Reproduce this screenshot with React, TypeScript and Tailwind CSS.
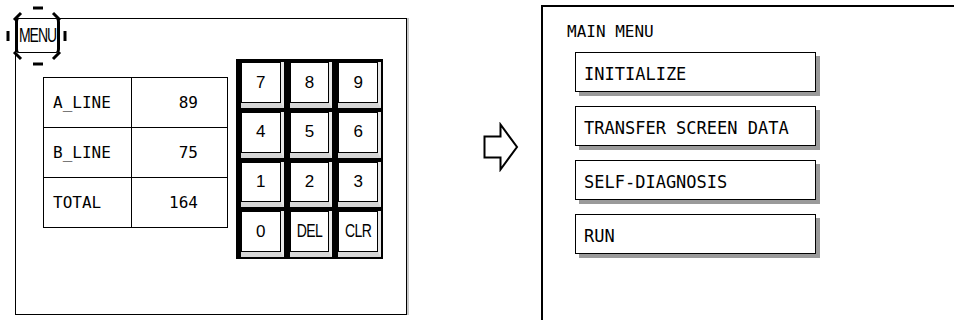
import React from "react";

const ROWS = [
  { name: "A_LINE", value: "89" },
  { name: "B_LINE", value: "75" },
  { name: "TOTAL", value: "164" },
];

const KEYS = ["7", "8", "9", "4", "5", "6", "1", "2", "3", "0", "DEL", "CLR"];

const MENU_ITEMS = ["INITIALIZE", "TRANSFER SCREEN DATA", "SELF-DIAGNOSIS", "RUN"];

const MONO = { fontFamily: '"DejaVu Sans Mono", "Liberation Mono", monospace' };

function Key({ label }: { label: string }) {
  const small = label.length > 1;
  return (
    <div className="flex border-l-[5px] border-t-[3px] border-black">
      <div className="flex flex-1 border-r border-b border-black">
        <div className="flex flex-1 border-r-[3px] border-b-[5px] border-r-[#e8e8e8] border-b-[#d6d6d6]">
          <div className="flex flex-1 items-center justify-center border border-black bg-white text-black">
            {small ? (
              <span className="inline-block scale-y-[1.3] text-[14px] tracking-[-0.5px]">{label}</span>
            ) : (
              <span className="text-[17px]">{label}</span>
            )}
          </div>
        </div>
      </div>
    </div>
  );
}

function Selection() {
  // touch marks around the MENU switch
  return (
    <svg
      className="pointer-events-none absolute left-[-16px] top-[-19px]"
      width="75"
      height="75"
      viewBox="0 0 75 75"
    >
      <g stroke="#000" strokeWidth="3" strokeLinecap="butt">
        <line x1="33" y1="8" x2="43" y2="8" />
        <line x1="33" y1="64" x2="43" y2="64" />
        <line x1="8" y1="31" x2="8" y2="41" />
        <line x1="65" y1="31" x2="65" y2="41" />
        <line x1="14" y1="20" x2="21" y2="13" />
        <line x1="53" y1="13" x2="60" y2="20" />
        <line x1="14" y1="52" x2="21" y2="59" />
        <line x1="53" y1="59" x2="60" y2="52" />
      </g>
    </svg>
  );
}

export default function App() {
  return (
    <div
      className="flex h-[320px] w-[954px] items-start overflow-hidden bg-white text-black"
      style={{ fontFamily: '"Liberation Sans", Arial, sans-serif' }}
    >
      {/* Left: operation screen */}
      <div className="relative ml-[15px] mt-[18px] flex h-[297px] w-[392px] shrink-0 items-start gap-[8px] border border-black pl-[27px] pt-[40px] shadow-[2px_0_0_#c8c8c8]">
        <Selection />
        <div className="absolute left-[-1px] top-[-1px] flex h-[35px] w-[45px] items-center justify-center rounded-[4px] border-x-[3px] border-y border-black bg-white">
          <span className="inline-block scale-y-[1.4] text-[14px] tracking-[-1px]">MENU</span>
        </div>

        <table className="mt-[18px] border-collapse text-[16px]" style={MONO}>
          <tbody>
            {ROWS.map((r) => (
              <tr key={r.name} className="h-[50px]">
                <td className="w-[88px] border border-black pl-[9px]">{r.name}</td>
                <td className="w-[96px] border border-black pr-[29px] text-right">{r.value}</td>
              </tr>
            ))}
          </tbody>
        </table>

        <div className="grid h-[200px] w-[147px] grid-cols-3 grid-rows-4 border-r border-b border-black">
          {KEYS.map((k) => (
            <Key key={k} label={k} />
          ))}
        </div>
      </div>

      {/* Arrow */}
      <svg className="ml-[76px] mt-[122px] shrink-0" width="36" height="50" viewBox="0 0 36 50">
        <path d="M1.5 14.5 H17.5 V2.5 L34 25 L17.5 47.5 V35.5 H1.5 Z" fill="none" stroke="#000" strokeWidth="2" />
      </svg>

      {/* Right: main menu screen */}
      <div className="ml-[22px] mt-[5px] h-[315px] flex-1 border-l-2 border-t-2 border-black" style={MONO}>
        <div className="pl-[24px] pt-[17px] text-[16px] leading-[16px]">MAIN MENU</div>
        <div className="mt-[12px] flex flex-col gap-[14px] pl-[32px]">
          {MENU_ITEMS.map((item) => (
            <div
              key={item}
              className="flex h-[40px] w-[241px] items-center border border-black bg-white pl-[8px] pt-[6px] text-[17px] shadow-[4px_4px_0_#9a9a9a]"
            >
              {item}
            </div>
          ))}
        </div>
      </div>
    </div>
  );
}
